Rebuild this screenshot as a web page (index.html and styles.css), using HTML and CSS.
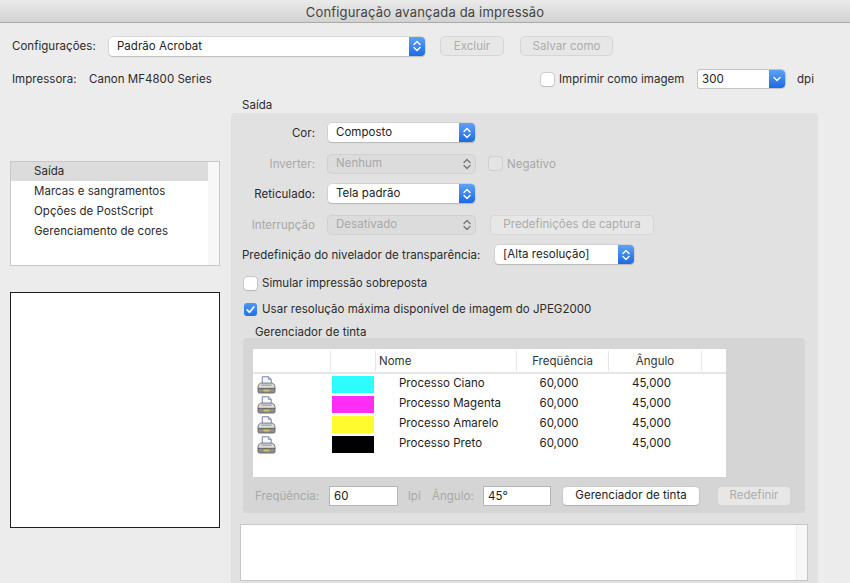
FILE: index.html
```html
<!DOCTYPE html>
<html lang="pt">
<head>
<meta charset="utf-8">
<title>Configuração avançada da impressão</title>
<link rel="stylesheet" href="styles.css">
</head>
<body>
<svg class="defs" width="0" height="0" aria-hidden="true">
  <symbol id="updown" viewBox="0 0 10 14"><path d="M2 5.5 5 2.5 8 5.5M2 8.5 5 11.5 8 8.5" fill="none" stroke="currentColor" stroke-width="1.4" stroke-linecap="round" stroke-linejoin="round"/></symbol>
  <symbol id="down" viewBox="0 0 10 14"><path d="M2 5.5 5 8.5 8 5.5" fill="none" stroke="currentColor" stroke-width="1.4" stroke-linecap="round" stroke-linejoin="round"/></symbol>
  <symbol id="printer" viewBox="0 0 20 19">
    <path d="M5.5 .8H12L15 3.6V8H5.5Z" fill="#f6f8fd" stroke="#6d7ea6"/>
    <path d="M12 .8V3.6H15" fill="none" stroke="#6d7ea6" stroke-width=".8"/>
    <path d="M4 7.5H16Q18.8 8.5 19 11.5V13.5H1V11.5Q1.2 8.5 4 7.5Z" fill="#dcdcdc" stroke="#666" stroke-width=".9"/>
    <rect x="4.5" y="9" width="11" height="1.3" fill="#a0a0a0"/>
    <path d="M1 13H19V16.4Q19 18 17.4 18H2.6Q1 18 1 16.4Z" fill="#8e8e8e" stroke="#555" stroke-width=".8"/>
    <rect x="7" y="14.5" width="6" height="1.8" fill="#d8c25a"/>
  </symbol>
</svg>

<header class="titlebar">Configuração avançada da impressão</header>

<div class="top">
  <div class="row-settings">
    <span class="lbl-settings">Configurações:</span>
    <div class="select select-settings"><span class="val">Padrão Acrobat</span><span class="arrow"><svg class="chev"><use href="#updown"/></svg></span></div>
    <button class="btn btn-off btn-excluir">Excluir</button>
    <button class="btn btn-off btn-salvar">Salvar como</button>
  </div>
  <div class="row-printer">
    <span class="lbl-printer">Impressora:</span>
    <span class="printer-name">Canon MF4800 Series</span>
    <label class="check check-image"><span class="box"></span>Imprimir como imagem</label>
    <div class="combo"><span class="val">300</span><span class="arrow"><svg class="chev"><use href="#down"/></svg></span></div>
    <span class="dpi">dpi</span>
  </div>
</div>

<main class="main">
  <aside class="side">
    <ul class="list">
      <li class="list-item list-selected">Saída</li>
      <li class="list-item">Marcas e sangramentos</li>
      <li class="list-item">Opções de PostScript</li>
      <li class="list-item">Gerenciamento de cores</li>
    </ul>
    <div class="preview"></div>
  </aside>

  <section class="content">
    <h2 class="section-title">Saída</h2>
    <div class="panel">
      <div class="form-row row-cor">
        <span class="form-label">Cor:</span>
        <div class="select select-form"><span class="val">Composto</span><span class="arrow"><svg class="chev"><use href="#updown"/></svg></span></div>
      </div>
      <div class="form-row row-inverter">
        <span class="form-label off">Inverter:</span>
        <div class="select select-form select-off"><span class="val">Nenhum</span><span class="arrow"><svg class="chev"><use href="#updown"/></svg></span></div>
        <label class="check off check-neg"><span class="box box-off"></span>Negativo</label>
      </div>
      <div class="form-row row-ret">
        <span class="form-label">Reticulado:</span>
        <div class="select select-form"><span class="val">Tela padrão</span><span class="arrow"><svg class="chev"><use href="#updown"/></svg></span></div>
      </div>
      <div class="form-row row-int">
        <span class="form-label off">Interrupção</span>
        <div class="select select-form select-off"><span class="val">Desativado</span><span class="arrow"><svg class="chev"><use href="#updown"/></svg></span></div>
        <button class="btn btn-off btn-capture">Predefinições de captura</button>
      </div>
      <div class="row-flat">
        <span class="flat-label">Predefinição do nivelador de transparência:</span>
        <div class="select select-flat"><span class="val">[Alta resolução]</span><span class="arrow"><svg class="chev"><use href="#updown"/></svg></span></div>
      </div>
      <label class="check row-sim"><span class="box"></span>Simular impressão sobreposta</label>
      <label class="check row-jpeg"><span class="box box-on"><svg viewBox="0 0 14 14" width="13" height="13"><path d="M3.4 7.4 6 10 10.6 4.2" fill="none" stroke="#fff" stroke-width="1.8" stroke-linecap="round" stroke-linejoin="round"/></svg></span>Usar resolução máxima disponível de imagem do JPEG2000</label>

      <h3 class="ink-title">Gerenciador de tinta</h3>
      <div class="ink">
        <div class="table">
          <div class="thead">
            <span class="th"></span><span class="th"></span>
            <span class="th th-name">Nome</span>
            <span class="th th-num">Freqüência</span>
            <span class="th th-num">Ângulo</span>
            <span class="th th-last"></span>
          </div>
          <div class="tr"><svg class="pr"><use href="#printer"/></svg><span class="sw sw-c"></span><span class="td-name">Processo Ciano</span><span class="td-num">60,000</span><span class="td-num">45,000</span></div>
          <div class="tr"><svg class="pr"><use href="#printer"/></svg><span class="sw sw-m"></span><span class="td-name">Processo Magenta</span><span class="td-num">60,000</span><span class="td-num">45,000</span></div>
          <div class="tr"><svg class="pr"><use href="#printer"/></svg><span class="sw sw-y"></span><span class="td-name">Processo Amarelo</span><span class="td-num">60,000</span><span class="td-num">45,000</span></div>
          <div class="tr"><svg class="pr"><use href="#printer"/></svg><span class="sw sw-k"></span><span class="td-name">Processo Preto</span><span class="td-num">60,000</span><span class="td-num">45,000</span></div>
        </div>
        <div class="ink-controls">
          <span class="off lbl-freq">Freqüência:</span>
          <span class="input input-freq">60</span>
          <span class="off lbl-lpi">lpi</span>
          <span class="off lbl-ang">Ângulo:</span>
          <span class="input input-ang">45°</span>
          <button class="btn btn-on btn-ink">Gerenciador de tinta</button>
          <button class="btn btn-off btn-reset">Redefinir</button>
        </div>
      </div>
      <div class="note"><span class="note-scroll"></span></div>
    </div>
  </section>
</main>
</body>
</html>
```
FILE: styles.css
```css
* { box-sizing: border-box; }
html, body { margin: 0; padding: 0; height: 583px; overflow: hidden; }
body {
  background: #ececec;
  color: #2b2b2b;
  font: 11.5px/16px Inter, "Liberation Sans", sans-serif;
  letter-spacing: .03px;
}
.defs { position: absolute; }
h2, h3, ul { margin: 0; padding: 0; font: inherit; list-style: none; }

.titlebar {
  height: 23px;
  background: linear-gradient(#ebebeb, #d2d2d2);
  border-bottom: 1px solid #a9a9a9;
  text-align: center;
  font-size: 13px;
  line-height: 24px;
  color: #444;
  letter-spacing: .17px;
}

.top { padding: 13px 0 0 12px; }
.row-settings { display: flex; align-items: center; height: 20px; }
.lbl-settings { width: 97px; }
.select-settings { width: 316px; }
.btn-excluir { width: 62px; margin-left: 16px; }
.btn-salvar { width: 91px; margin-left: 18px; }

.row-printer { display: flex; align-items: center; height: 20px; margin-top: 13px; }
.lbl-printer { width: 77px; }
.printer-name { width: 452px; }
.check-image { width: 157px; }
.dpi { margin-left: 12px; }

.select, .combo {
  display: flex;
  height: 19px;
  background: #fff;
  border-radius: 4px;
  box-shadow: 0 0 0 .5px #c2c2c2, 0 1px 1px rgba(0,0,0,.22);
  color: #222;
}
.val { flex: 1; padding-left: 8px; line-height: 19px; }
.arrow {
  width: 16px;
  display: flex;
  align-items: center;
  justify-content: center;
  border-radius: 0 4px 4px 0;
  background: linear-gradient(#5da2f6, #1c6ae4);
  color: #fff;
}
.chev { width: 10px; height: 14px; }
.combo { width: 87px; height: 18px; border-radius: 2px 4px 4px 2px; box-shadow: 0 0 0 1px #c4c4c4; }
.combo .val { padding-left: 4px; line-height: 18px; }
.select-off { background: #dcdcdc; box-shadow: 0 0 0 1px #d0d0d0; color: #a9a9a9; }
.select-off .val { line-height: 17px; }
.select-off .arrow { background: none; color: #777; }

.btn {
  height: 18px;
  padding: 0;
  font: inherit;
  letter-spacing: inherit;
  border: 0;
  border-radius: 4px;
  line-height: 17px;
}
.btn-off { background: #e7e7e7; box-shadow: 0 0 0 1px #d6d6d6; color: #acacac; }
.btn-on { background: #fff; box-shadow: 0 0 0 .5px #c0c0c0, 0 1px 1px rgba(0,0,0,.25); color: #222; }

.check { display: flex; align-items: center; gap: 5px; }
.box {
  width: 13px; height: 13px;
  flex: none;
  background: #fff;
  border-radius: 3px;
  box-shadow: 0 0 0 .5px #adadad, 0 1px 1px rgba(0,0,0,.15);
  display: flex;
}
.box-off { background: #e4e4e4; box-shadow: 0 0 0 1px #cfcfcf; }
.box-on { background: linear-gradient(#4f97f3, #2270e6); box-shadow: none; }
.off { color: #a8a8a8; }

.main { display: grid; grid-template-columns: 231px 587px; height: 495px; }
.side { padding: 72px 0 0 10px; }
.list {
  width: 210px;
  height: 105px;
  background: #fff;
  border: 1px solid #c8c8c8;
  padding-right: 11px;
  background-image: linear-gradient(#f7f7f7, #f7f7f7);
  background-size: 11px 100%;
  background-position: right;
  background-repeat: no-repeat;
}
.list-item { height: 20px; line-height: 18px; padding-left: 23px; }
.list-selected { background: #dcdcdc; height: 19px; margin-bottom: 1px; }
.preview {
  width: 210px;
  height: 236px;
  margin-top: 26px;
  background: #fff;
  border: 1px solid #1f1f1f;
}

.content { padding-top: 8px; }
.section-title { height: 16px; padding-left: 11px; line-height: 16px; }
.panel {
  height: 472px;
  background: #e1e1e1;
  border-radius: 4px 4px 0 0;
  padding-top: 10px;
}
.form-row { display: flex; align-items: center; height: 19px; }
.row-inverter { margin-top: 12px; }
.row-ret { margin-top: 11px; }
.row-int { margin-top: 12px; }
.form-label { width: 84px; text-align: right; margin-right: 13px; }
.select-form { width: 147px; }
.select-off { height: 18px; }
.check-neg { margin-left: 14px; }
.btn-capture { width: 162px; margin-left: 16px; }

.row-flat { display: flex; align-items: center; height: 19px; margin-top: 11px; padding-left: 11px; }
.flat-label { width: 253px; flex: none; }
.select-flat { width: 139px; }
.row-sim { margin: 11px 0 0 13px; height: 16px; }
.row-jpeg { margin: 10px 0 0 13px; height: 16px; }

.ink-title { margin: 7px 0 0 24px; height: 14px; line-height: 16px; }
.ink {
  width: 562px;
  height: 175px;
  margin: 0 0 0 12px;
  padding: 11px 0 0 10px;
  background: #d5d5d5;
  border-radius: 4px;
}
.table { width: 473px; height: 128px; background: #fff; }
.thead, .tr { display: grid; grid-template-columns: 77px 45px 141px 92px 93px 25px; }
.thead { height: 25px; border-bottom: 2px solid #e6e6e6; }
.th { height: 20px; margin-top: 2px; line-height: 20px; border-left: 1px solid #e6e6e6; color: #333; }
.th:first-child { border-left: 0; }
.th-name { padding-left: 3px; }
.th-num { text-align: center; }
.tr { height: 20px; align-items: start; line-height: 18px; color: #1c1c1c; }
.pr { width: 19px; height: 18px; margin: 2px 0 0 4px; }
.sw { width: 42px; height: 17px; margin: 2px 0 0 2px; }
.sw-c { background: #2dfdff; }
.sw-m { background: #ff2df5; }
.sw-y { background: #fffb2f; }
.sw-k { background: #000; }
.td-name { padding-left: 24px; white-space: nowrap; }
.td-num { text-align: center; padding-right: 6px; }

.ink-controls { display: flex; align-items: center; height: 19px; margin-top: 9px; padding-left: 2px; }
.lbl-freq { width: 75px; }
.input {
  height: 18px;
  background: #fff;
  box-shadow: 0 0 0 1px #b5b5b5;
  padding-left: 4px;
  line-height: 19px;
  color: #222;
}
.input-freq { width: 67px; }
.lbl-lpi { margin-left: 11px; width: 24px; }
.lbl-ang { width: 52px; }
.input-ang { width: 66px; }
.btn-ink { width: 136px; margin-left: 13px; }
.btn-reset { width: 72px; margin-left: 19px; }

.note {
  width: 568px;
  height: 57px;
  margin: 11px 0 0 9px;
  background: #fff;
  border: 1px solid #c6c6c6;
  display: flex;
  justify-content: flex-end;
}
.note-scroll { width: 11px; background: #f7f7f7; border-left: 1px solid #ececec; }
```
